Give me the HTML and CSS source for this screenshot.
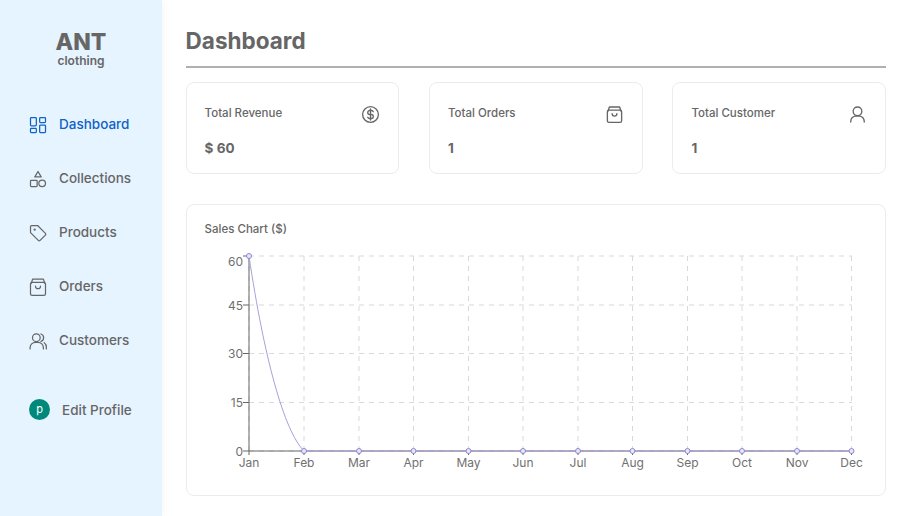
FILE: index.html
```html
<!DOCTYPE html>
<html>
<head>
    <link rel="stylesheet" href="styles.css">
</head>
<body>
    <aside class="sidebar">
        <div class="logo">
            <div class="logo-name">ANT</div>
            <div class="logo-sub">clothing</div>
        </div>
        <nav class="nav">
            <a class="nav-item active">
                <svg class="icon" viewBox="0 0 24 24"><rect x="3" y="3" width="7" height="10" rx="1"/><rect x="14" y="3" width="7" height="6" rx="1"/><rect x="14" y="12" width="7" height="9" rx="1"/><rect x="3" y="16" width="7" height="5" rx="1"/></svg>
                <span>Dashboard</span>
            </a>
            <a class="nav-item">
                <svg class="icon" viewBox="0 0 24 24"><path d="M12 3l3.8 6.500H8.200z"/><rect x="3" y="13.500" width="8" height="7.500" rx="1"/><circle cx="17" cy="17.200" r="4"/></svg>
                <span>Collections</span>
            </a>
            <a class="nav-item">
                <svg class="icon" viewBox="0 0 24 24"><path d="M3 4.500A1.500 1.500 0 0 1 4.500 3h7l9.400 9.400a1.500 1.500 0 0 1 0 2.100l-6.400 6.400a1.500 1.500 0 0 1-2.100 0L3 11.500z"/><circle cx="8" cy="8" r=".6"/></svg>
                <span>Products</span>
            </a>
            <a class="nav-item">
                <svg class="icon" viewBox="0 0 24 24"><path d="M4 7.500L5.500 2.500h13L20 7.500"/><rect x="3" y="6.500" width="18" height="15.500" rx="2"/><path d="M9 11a3 3 0 0 0 6 0"/></svg>
                <span>Orders</span>
            </a>
            <a class="nav-item">
                <svg class="icon" viewBox="0 0 24 24"><circle cx="10" cy="8" r="4.600"/><path d="M2.500 21.500v-1.500a6.500 6.500 0 0 1 6.500-6.500h3a6.500 6.500 0 0 1 6.500 6.500v1.500"/><path d="M15.500 3.600a4.600 4.600 0 0 1 0 8.800"/><path d="M19.500 14a6.500 6.500 0 0 1 2.500 5.500v2"/></svg>
                <span>Customers</span>
            </a>
        </nav>
        <a class="profile">
            <span class="avatar">P</span>
            <span>Edit Profile</span>
        </a>
    </aside>

    <main class="content">
        <h1 class="title">Dashboard</h1>

        <section class="stats">
            <div class="card stat">
                <div class="stat-top">
                    <span class="stat-label">Total Revenue</span>
                    <svg class="icon" viewBox="0 0 24 24"><circle cx="12" cy="12" r="10"/><path d="M15.500 8.500a2.500 2.500 0 0 0-2.500-1.500h-2a2.500 2.500 0 0 0 0 5h2a2.500 2.500 0 0 1 0 5h-2a2.500 2.500 0 0 1-2.500-1.500"/><path d="M12 5v14"/></svg>
                </div>
                <div class="stat-value">$ 60</div>
            </div>
            <div class="card stat">
                <div class="stat-top">
                    <span class="stat-label">Total Orders</span>
                    <svg class="icon" viewBox="0 0 24 24"><path d="M4 7.500L5.500 2.500h13L20 7.500"/><rect x="3" y="6.500" width="18" height="15.500" rx="2"/><path d="M9 11a3 3 0 0 0 6 0"/></svg>
                </div>
                <div class="stat-value">1</div>
            </div>
            <div class="card stat">
                <div class="stat-top">
                    <span class="stat-label">Total Customer</span>
                    <svg class="icon" viewBox="0 0 24 24"><circle cx="12" cy="8" r="5.500"/><path d="M3.500 21.500v-1a6.500 6.500 0 0 1 6.500-6.500h4a6.500 6.500 0 0 1 6.500 6.500v1"/></svg>
                </div>
                <div class="stat-value">1</div>
            </div>
        </section>

        <section class="card chart-card">
            <div class="stat-label">Sales Chart ($)</div>
            <svg class="chart" viewBox="0 0 698 260" width="698" height="260">
                <g class="grid">
                    <path d="M63 19H666M63 68H666M63 116.500H666M63 165.500H666M63 214H666"/>
                    <path d="M63 19V214M118 19V214M173 19V214M227.500 19V214M282.500 19V214M337 19V214M392 19V214M446.500 19V214M501.500 19V214M556 19V214M611 19V214M665.500 19V214"/>
                </g>
                <g class="axis">
                    <path d="M63 19V214H666"/>
                    <path d="M57 19H63M57 68H63M57 116.500H63M57 165.500H63M57 214H63"/>
                    <path d="M63 214v4M118 214v4M173 214v4M227.500 214v4M282.500 214v4M337 214v4M392 214v4M446.500 214v4M501.500 214v4M556 214v4M611 214v4M665.500 214v4"/>
                </g>
                <g class="y-labels">
                    <text x="57" y="29">60</text>
                    <text x="57" y="73">45</text>
                    <text x="57" y="121">30</text>
                    <text x="57" y="170">15</text>
                    <text x="57" y="219">0</text>
                </g>
                <g class="x-labels">
                    <text x="63" y="230">Jan</text>
                    <text x="118" y="230">Feb</text>
                    <text x="173" y="230">Mar</text>
                    <text x="227.500" y="230">Apr</text>
                    <text x="282.500" y="230">May</text>
                    <text x="337" y="230">Jun</text>
                    <text x="392" y="230">Jul</text>
                    <text x="446.500" y="230">Aug</text>
                    <text x="501.500" y="230">Sep</text>
                    <text x="556" y="230">Oct</text>
                    <text x="611" y="230">Nov</text>
                    <text x="665.500" y="230">Dec</text>
                </g>
                <path class="line" d="M63 19C78 120 98 194 118 214H665.500"/>
                <g class="dots">
                    <circle cx="63" cy="19" r="2.500"/><circle cx="118" cy="214" r="2.500"/><circle cx="173" cy="214" r="2.500"/>
                    <circle cx="227.500" cy="214" r="2.500"/><circle cx="282.500" cy="214" r="2.500"/><circle cx="337" cy="214" r="2.500"/>
                    <circle cx="392" cy="214" r="2.500"/><circle cx="446.500" cy="214" r="2.500"/><circle cx="501.500" cy="214" r="2.500"/>
                    <circle cx="556" cy="214" r="2.500"/><circle cx="611" cy="214" r="2.500"/><circle cx="665.500" cy="214" r="2.500"/>
                </g>
            </svg>
        </section>
    </main>
</body>
</html>
```
FILE: styles.css
```css
* {
    box-sizing: border-box;
}

html, body {
    height: 100%;
}

body {
    margin: 0;
    display: flex;
    overflow: hidden;
    font-family: Inter, "Liberation Sans", sans-serif;
    color: #666;
    background: #fff;
}

.sidebar {
    width: 162px;
    height: 516px;
    flex-shrink: 0;
    padding-top: 30px;
    background: #e6f4ff;
    box-shadow: 2px 0 8px rgba(0, 0, 0, 0.03);
}

.logo {
    text-align: center;
}

.logo-name {
    font-size: 23px;
    line-height: 24px;
    font-weight: 800;
}

.logo-sub {
    font-size: 12px;
    line-height: 14px;
    font-weight: 600;
}

.nav {
    display: flex;
    flex-direction: column;
    gap: 34px;
    margin-top: 47px;
    padding-left: 28px;
}

.nav-item {
    display: flex;
    align-items: center;
    gap: 11px;
    height: 20px;
    font-size: 13.500px;
    font-weight: 500;
    color: #666;
}

/* label sits a little higher than its icon */
.nav-item span {
    padding-bottom: 2px;
}

.nav-item.active {
    color: #0f62c6;
}

.icon {
    width: 20px;
    height: 20px;
    flex-shrink: 0;
    fill: none;
    stroke: currentColor;
    stroke-width: 1.500;
    stroke-linecap: round;
    stroke-linejoin: round;
}

.profile {
    display: flex;
    align-items: center;
    gap: 12px;
    margin-top: 48px;
    padding-left: 29px;
    font-size: 13.500px;
    font-weight: 500;
}

.avatar {
    width: 21px;
    height: 21px;
    border-radius: 50%;
    background: #00897b;
    color: #fff;
    font-size: 11px;
    font-weight: 400;
    line-height: 20px;
    text-align: center;
    text-transform: lowercase;
}

.content {
    flex: 1;
    min-width: 0;
    padding: 0 20px 0 23.600px;
}

.title {
    margin: 0;
    height: 68px;
    padding-top: 27px;
    font-size: 22.500px;
    line-height: 28px;
    font-weight: 700;
    border-bottom: 2px solid #b0b0b0;
}

.stats {
    display: grid;
    grid-template-columns: repeat(3, 1fr);
    column-gap: 29.800px;
    margin-top: 14px;
}

.card {
    background: #fff;
    border: 1px solid #ececf0;
    border-radius: 8px;
}

.stat {
    height: 92px;
    padding: 21px 18px 0;
}

.stat-top {
    display: flex;
    justify-content: space-between;
    align-items: center;
    height: 20px;
}

.stat-top .stat-label {
    padding-bottom: 2px;
}

.stat-top .icon {
    width: 19px;
    height: 19px;
    stroke-width: 1.700;
}

.stat-label {
    font-size: 11.500px;
    line-height: 20px;
    font-weight: 500;
}

.stat-value {
    margin-top: 14px;
    font-size: 13.500px;
    line-height: 20px;
    font-weight: 700;
}

.chart-card {
    height: 292px;
    margin-top: 30px;
    padding-top: 14px;
}

.chart-card .stat-label {
    padding-left: 18px;
}

.chart {
    display: block;
    margin: -2px 0 0 -0.600px;
    font-size: 12px;
}

.grid path {
    fill: none;
    stroke: #d9d9d9;
    stroke-dasharray: 5 5;
}

.axis path {
    fill: none;
    stroke: #666;
}

.y-labels text {
    fill: #707070;
    text-anchor: end;
}

.x-labels text {
    fill: #707070;
    text-anchor: middle;
}

.line {
    fill: none;
    stroke: #a99fdc;
}

.dots circle {
    fill: #e9e6fa;
    stroke: #8f86cf;
}
```
